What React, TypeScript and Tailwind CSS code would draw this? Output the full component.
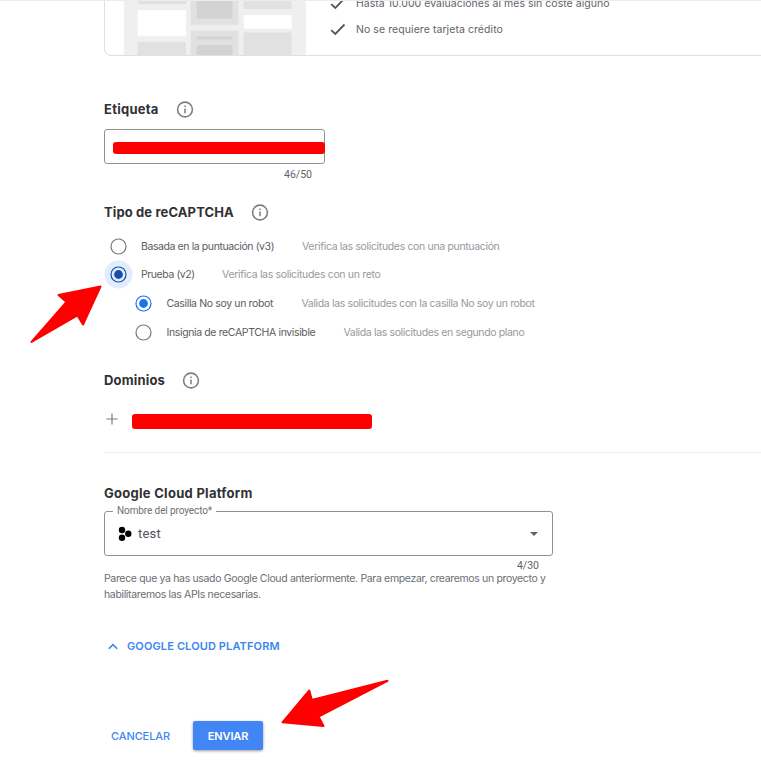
import React from "react";

function Info() {
  return (
    <svg width="18" height="18" viewBox="0 0 18 18" fill="none" className="shrink-0">
      <circle cx="9" cy="9.500" r="7.400" stroke="#7b7e82" strokeWidth="1.6" />
      <path d="M9 8.500v4.800M9 5.500v1.500" stroke="#7b7e82" strokeWidth="1.5" />
    </svg>
  );
}

function Heading({ text, className, info = true }: { text: string; className: string; info?: boolean }) {
  return (
    <div className="flex h-6 items-center">
      <h2 className={`whitespace-nowrap pt-px text-[13px] font-bold text-[#303134] ${className}`}>{text}</h2>
      {info && <Info />}
    </div>
  );
}

function Radio({ state }: { state: "off" | "on" | "focus" }) {
  const color = state === "off" ? "#77797c" : state === "on" ? "#1a73e8" : "#174ea6";
  return (
    <svg width="29" height="29" viewBox="0 0 29 29" fill="none" className="shrink-0">
      {state === "focus" && <circle cx="14.500" cy="14.500" r="14" fill="#e1edfd" />}
      <circle cx="14.500" cy="14.500" r="7.5" stroke={color} strokeWidth="1.2" />
      {state !== "off" && <circle cx="14.500" cy="14.500" r="4.4" fill={color} />}
    </svg>
  );
}

type OptionProps = {
  state: "off" | "on" | "focus";
  label: string;
  hint: string;
  row: string;
  labelClass: string;
  hintClass: string;
};

function Option({ state, label, hint, row, labelClass, hintClass }: OptionProps) {
  return (
    <label className={`flex items-center whitespace-nowrap text-[10.5px] ${row}`}>
      <Radio state={state} />
      <span className={`shrink-0 text-[#5a5d61] ${labelClass}`}>{label}</span>
      <span className={`text-[#96999d] ${hintClass}`}>{hint}</span>
    </label>
  );
}

function Check() {
  return (
    <svg width="16" height="14" viewBox="0 0 16 14" fill="none" className="shrink-0">
      <path d="M1.2 7.1 5.3 10.9 14.5 1.5" stroke="#54575c" strokeWidth="1.8" />
    </svg>
  );
}

function Preview() {
  return (
    <svg width="182" height="55" viewBox="124 0 182 55" className="shrink-0">
      <path fill="#efefef" d="M124 0h182v55H124z" />
      <path fill="#e1e1e1" d="M137.7 0H186v4.3h-48.3zM137.7 42H186v13h-48.3zM190.7 0h47.8v24.7h-47.8zM190.7 30.5h47.8V55h-47.8zM243.7 0h48v9h-48zM243.7 32.5h48V55h-48z" />
      <path fill="#fff" d="M137.7 10H186v26.3h-48.3zM243.7 15h48v13.7h-48z" />
      <path fill="#d3d3d3" d="M196.7 0h35.8v18.5h-35.8zM196.7 36.5h35.8v3h-35.8zM196.7 45h35.8v10h-35.8z" />
    </svg>
  );
}

export default function App() {
  return (
    <div className="relative h-[772px] w-[761px] overflow-hidden bg-white font-['Inter',sans-serif]">
      <section className="ml-[104px] flex h-14 rounded-bl-[7px] border-b border-l border-[#dfe0e2] pl-[19px]">
        <Preview />
        <ul className="ml-6 whitespace-nowrap text-[10.5px] text-[#5f6368]">
          <li className="flex h-4 items-start gap-2.5">
            <span className="-mt-[3px]"><Check /></span>
            <span className="-mt-[2px] leading-[11px] tracking-[0.03px]">Hasta 10.000 evaluaciones al mes sin coste alguno</span>
          </li>
          <li className="mt-1 flex h-5 items-center gap-2.5">
            <Check />
            <span className="tracking-[0.07px]">No se requiere tarjeta crédito</span>
          </li>
        </ul>
      </section>
      <div className="absolute inset-x-0 top-0 h-px bg-[#ececec]" />

      <main className="pl-[104px]">
        <div className="mt-[41px]">
          <Heading text="Etiqueta" className="w-[72px] tracking-[0.25px]" />
        </div>
        <div className="mt-2 flex h-[35px] w-[221px] items-center rounded-[3px] border border-[#8f9295] pl-2">
          <div className="mt-[3px] h-3 w-[212px] shrink-0 rounded-[3px] bg-[#ff0000]" />
        </div>
        <div className="flex h-5 w-[208px] items-center justify-end pt-px font-['Roboto',sans-serif] text-[10.5px] text-[#5f6368]">46/50</div>

        <div className="mt-4">
          <Heading text="Tipo de reCAPTCHA" className="w-[147px] tracking-[0.12px]" />
        </div>
        <div className="mt-2">
          <Option state="off" label="Basada en la puntuación (v3)" hint="Verifica las solicitudes con una puntuación" row="h-7" labelClass="ml-2 w-[161px] pt-px tracking-[-0.41px]" hintClass="pt-px tracking-[-0.34px]" />
          <Option state="focus" label="Prueba (v2)" hint="Verifica las solicitudes con un reto" row="h-[29px]" labelClass="ml-2 w-[81px] pt-px tracking-[-0.42px]" hintClass="pt-px tracking-[-0.33px]" />
          <Option state="on" label="Casilla No soy un robot" hint="Valida las solicitudes con la casilla No soy un robot" row="h-[29px] pl-[25px]" labelClass="ml-[8.500px] w-[135px] pt-px tracking-[-0.36px]" hintClass="pt-px tracking-[-0.36px]" />
          <Option state="off" label="Insignia de reCAPTCHA invisible" hint="Valida las solicitudes en segundo plano" row="h-7 pl-[25px]" labelClass="ml-[8.500px] w-[177px] pt-0.5 tracking-[-0.37px]" hintClass="pt-px tracking-[-0.36px]" />
        </div>

        <div className="mt-[22px]">
          <Heading text="Dominios" className="w-[78px] tracking-[0.18px]" />
        </div>
        <div className="mt-[17px] flex h-6 items-center">
          <svg width="12" height="12" viewBox="0 0 12 12" className="-mt-1 ml-0.5" fill="none">
            <path d="M6 .5v11M.5 6h11" stroke="#777a7e" strokeWidth="1.2" />
          </svg>
          <div className="ml-3.5 mt-px h-[15px] w-[240px] rounded-[3px] bg-[#ff0000]" />
        </div>
        <div className="mt-[19px] h-px bg-[#efefef]" />

        <div className="mt-7">
          <Heading text="Google Cloud Platform" className="tracking-[0.28px]" info={false} />
        </div>
        <div className="relative mt-1.5 flex h-[45px] w-[449px] items-center rounded-[3px] border border-[#8f9295]">
          <span className="absolute -top-[7px] left-2 bg-white px-1 font-['Roboto',sans-serif] text-[10px] leading-3 tracking-[-0.1px] text-[#6d7074]">Nombre del proyecto*</span>
          <svg width="14" height="16" viewBox="0 0 14 16" className="ml-[12.500px]">
            <circle cx="4" cy="4" r="3.2" />
            <circle cx="4" cy="11.8" r="3.2" />
            <circle cx="10.3" cy="7.8" r="3.2" />
          </svg>
          <span className="ml-[6.500px] font-['Roboto',sans-serif] text-[13px] tracking-[0.2px] text-[#505256]">test</span>
          <svg width="8" height="4" viewBox="0 0 8 4" className="ml-auto mr-[14.500px]">
            <path d="M0 0h8L4 4z" fill="#5f6368" />
          </svg>
        </div>
        <div className="flex h-[15px] w-[435px] items-end justify-end font-['Roboto',sans-serif] text-[10.5px] leading-[10px] text-[#5f6368]">4/30</div>
        <p className="whitespace-nowrap text-[10.5px] leading-4 text-[#6b6e72]">
          <span className="tracking-[-0.34px]">Parece que ya has usado Google Cloud anteriormente. Para empezar, crearemos un proyecto y</span>
          <br />
          <span className="tracking-[-0.35px]">habilitaremos las APIs necesarias.</span>
        </p>

        <a className="mt-[31px] flex h-6 items-center whitespace-nowrap text-[11px] font-semibold text-[#3a86ec]">
          <svg width="10" height="7" viewBox="0 0 10 7" fill="none" className="ml-1 mr-[9px]">
            <path d="m.8 5.8 4.2-4.2 4.2 4.2" stroke="currentColor" strokeWidth="1.6" />
          </svg>
          <span className="tracking-[0.12px]">GOOGLE CLOUD PLATFORM</span>
        </a>
        <div className="mt-[63px] flex h-[29px] items-center text-[11px] font-medium">
          <button className="ml-[7px] w-[82px] pt-0.5 text-left tracking-[-0.1px] text-[#4285f4]">CANCELAR</button>
          <button className="h-[29px] w-[70px] rounded-[2px] bg-[#4285f4] pt-0.5 font-semibold tracking-[-0.15px] text-white shadow-[0_1px_3px_rgba(0,0,0,0.4)]">ENVIAR</button>
        </div>
      </main>

      <svg width="761" height="772" viewBox="0 0 761 772" className="pointer-events-none absolute left-0 top-0" fill="#ff0000" stroke="#ff0000" strokeWidth="2" strokeLinejoin="round">
        <path d="M100.5 286.5 58.5 295 66.5 302 31.5 342 77.500 315.500 83 324.500Z" />
        <path d="M282.500 722.300 309.300 690.500 311.800 700 387.500 680.800 318.500 716.500 323.500 726Z" />
      </svg>
    </div>
  );
}
